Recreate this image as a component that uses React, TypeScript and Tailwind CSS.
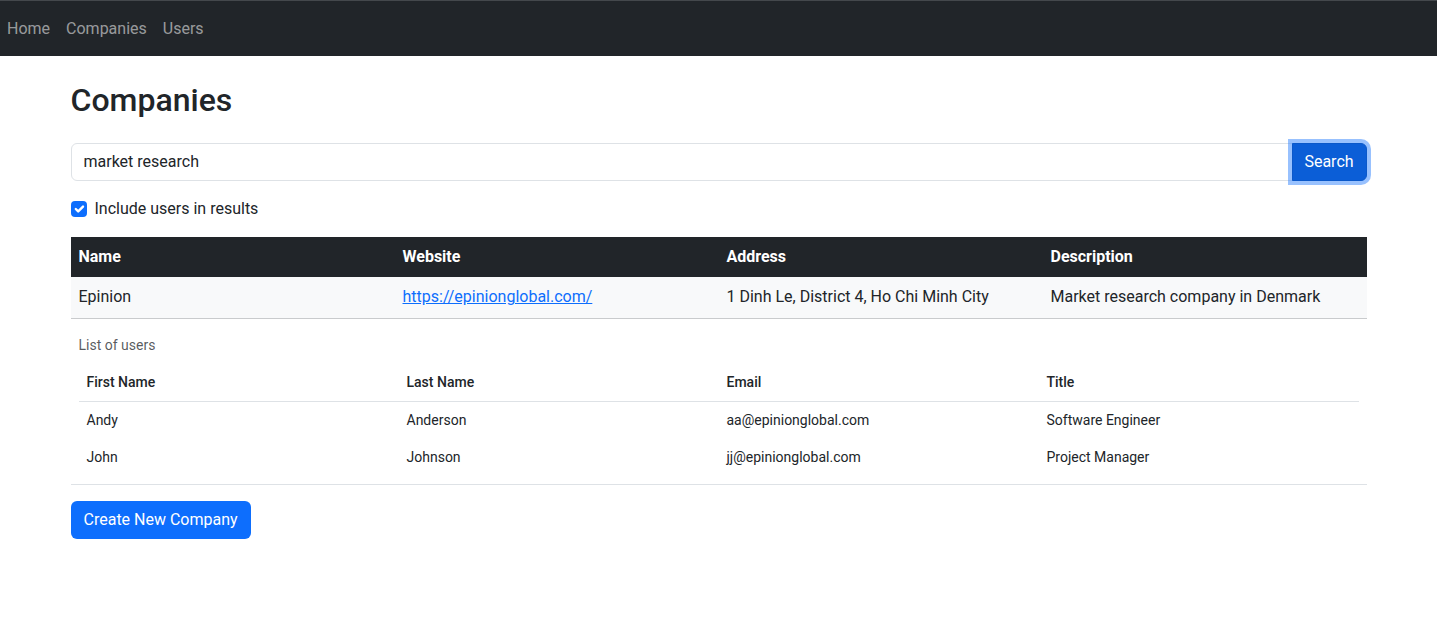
import { useState } from "react";

type User = { first: string; last: string; email: string; title: string };

const users: User[] = [
  { first: "Andy", last: "Anderson", email: "aa@epinionglobal.com", title: "Software Engineer" },
  { first: "John", last: "Johnson", email: "jj@epinionglobal.com", title: "Project Manager" },
];

const Navbar = () => (
  <nav className="h-14 bg-[#212529] border-t border-[#44484c] flex items-center px-0">
    <ul className="flex items-center">
      {["Home", "Companies", "Users"].map((l) => (
        <li key={l}>
          <a href="#" className="block px-[7px] mr-[2px] text-[16px] leading-6 text-[#ffffff8c]">
            {l}
          </a>
        </li>
      ))}
    </ul>
  </nav>
);

export default function App() {
  const [query, setQuery] = useState("market research");
  const [includeUsers, setIncludeUsers] = useState(true);

  return (
    <div className="min-h-[618px] bg-white text-[#212529] font-['Roboto',sans-serif] text-[16px] leading-6">
      <Navbar />
      <div className="w-[1296px] mx-auto">
        <h1 className="mt-[25px] mb-[24px] text-[32px] leading-[38px] font-medium">Companies</h1>

        <div className="flex items-stretch h-[38px]">
          <input
            value={query}
            onChange={(e) => setQuery(e.target.value)}
            className="flex-1 border border-[#dee2e6] rounded-l-[6px] px-3 text-[16px] text-[#212529] outline-none"
          />
          <button className="relative z-10 -ml-px w-[75px] bg-[#0b5ed7] border border-[#0a58ca] rounded-r-[6px] text-white text-[16px] shadow-[0_0_0_4px_rgba(49,132,253,0.5)]">
            Search
          </button>
        </div>

        <label className="mt-[16px] flex items-center gap-2 cursor-pointer">
          <span
            onClick={() => setIncludeUsers(!includeUsers)}
            className={`w-4 h-4 rounded-[4px] flex items-center justify-center ${includeUsers ? "bg-[#0d6efd]" : "border border-[#dee2e6] bg-white"}`}
          >
            {includeUsers && (
              <svg viewBox="0 0 20 20" className="w-4 h-4">
                <path d="M6 10l3 3 6-6" fill="none" stroke="#fff" strokeWidth="3" strokeLinecap="round" strokeLinejoin="round" />
              </svg>
            )}
          </span>
          <span>Include users in results</span>
        </label>

        <table className="mt-[16px] w-full table-fixed border-collapse mb-4">
          <thead>
            <tr className="bg-[#212529] text-white">
              <th className="w-1/4 text-left font-bold px-2 py-2 h-10">Name</th>
              <th className="w-1/4 text-left font-bold px-2 py-2">Website</th>
              <th className="w-1/4 text-left font-bold px-2 py-2">Address</th>
              <th className="w-1/4 text-left font-bold px-2 py-2">Description</th>
            </tr>
          </thead>
          <tbody>
            <tr className="bg-[#f8f9fa] border-b border-[#c9cbcd]">
              <td className="px-2 py-2 h-[41px]">Epinion</td>
              <td className="px-2 py-2">
                <a href="#" className="text-[#0d6efd] underline">https://epinionglobal.com/</a>
              </td>
              <td className="px-2 py-2">1 Dinh Le, District 4, Ho Chi Minh City</td>
              <td className="px-2 py-2">Market research company in Denmark</td>
            </tr>
            <tr className="border-b border-[#dee2e6]">
              <td colSpan={4} className="p-2">
                <table className="w-full table-fixed border-collapse text-[14px] leading-[21px]">
                  <caption className="caption-top text-left px-0 py-2 text-[#212529bf]">List of users</caption>
                  <thead>
                    <tr className="border-b border-[#dee2e6]">
                      <th className="w-1/4 text-left font-medium px-2 py-2">First Name</th>
                      <th className="w-1/4 text-left font-medium px-2 py-2">Last Name</th>
                      <th className="w-1/4 text-left font-medium px-2 py-2">Email</th>
                      <th className="w-1/4 text-left font-medium px-2 py-2">Title</th>
                    </tr>
                  </thead>
                  <tbody>
                    {users.map((u) => (
                      <tr key={u.email}>
                        <td className="px-2 py-2">{u.first}</td>
                        <td className="px-2 py-2">{u.last}</td>
                        <td className="px-2 py-2">{u.email}</td>
                        <td className="px-2 py-2">{u.title}</td>
                      </tr>
                    ))}
                  </tbody>
                </table>
              </td>
            </tr>
          </tbody>
        </table>

        <button className="h-[38px] px-[13px] bg-[#0d6efd] text-white rounded-[6px] text-[16px]">
          Create New Company
        </button>
      </div>
    </div>
  );
}
